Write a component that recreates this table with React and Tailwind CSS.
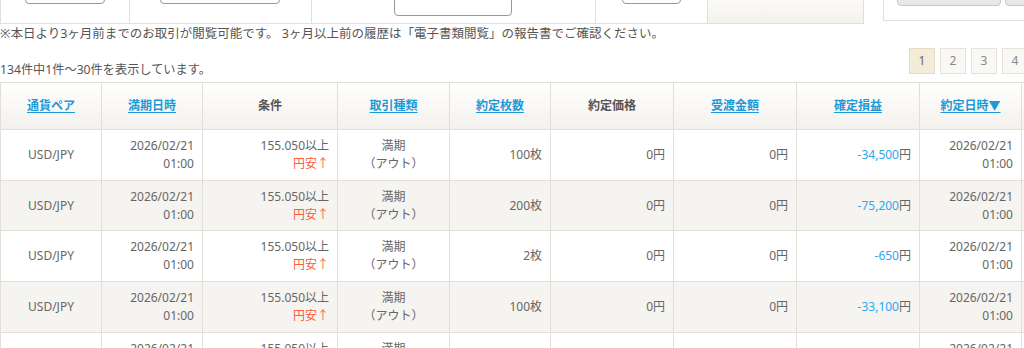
import React from 'react';

const rows = [
  { qty: '100枚', pl: '-34,500' },
  { qty: '200枚', pl: '-75,200' },
  { qty: '2枚', pl: '-650' },
  { qty: '100枚', pl: '-33,100' },
  { qty: '100枚', pl: '-12,000' },
];

const Link = ({ children }) => (
  <span className="text-[#1d9ad6] underline underline-offset-2 font-bold">{children}</span>
);

const headers = [
  { label: '通貨ペア', link: true, w: 'w-[101px]' },
  { label: '満期日時', link: true, w: 'w-[101px]' },
  { label: '条件', link: false, w: 'w-[135px]' },
  { label: '取引種類', link: true, w: 'w-[112px]' },
  { label: '約定枚数', link: true, w: 'w-[101px]' },
  { label: '約定価格', link: false, w: 'w-[123px]' },
  { label: '受渡金額', link: true, w: 'w-[123px]' },
  { label: '確定損益', link: true, w: 'w-[123px]' },
  { label: '約定日時▼', link: true, w: 'w-[102px]' },
  { label: '', link: false, w: 'w-[120px]' },
];

const td = 'border border-[#e2ded8] h-[50.7px] px-[8px] py-0 align-middle';

export default function App() {
  return (
    <div
      className="w-[1024px] h-[348px] overflow-hidden bg-white text-[12px] leading-[18px] text-[#555]"
      style={{ fontFamily: '"Noto Sans", "Noto Sans CJK JP", sans-serif' }}
    >
      {/* search form, scrolled off the top */}
      <div className="flex h-[24px]">
        <div className="flex w-[864px] h-[24px] border-l border-b border-r border-[#e2ded8] overflow-hidden">
          <div className="w-[129px] flex items-end pl-[24px] border-r border-[#e2ded8]">
            <div className="w-[80px] h-[30px] mb-[19px] border border-[#9a9a9a] rounded-[4px] bg-white" />
          </div>
          <div className="w-[182px] flex items-end pl-[30px] border-r border-[#e2ded8]">
            <div className="w-[120px] h-[30px] mb-[19px] border border-[#9a9a9a] rounded-[4px] bg-white" />
          </div>
          <div className="w-[284px] flex items-end pl-[82px] border-r border-[#e2ded8]">
            <div className="w-[118px] h-[30px] mb-[7px] border border-[#9a9a9a] rounded-[4px] bg-white" />
          </div>
          <div className="w-[112px] flex items-end pl-[26px] border-r border-[#e2ded8]">
            <div className="w-[59px] h-[30px] mb-[19px] border border-[#9a9a9a] rounded-[4px] bg-white" />
          </div>
          <div className="flex-1 bg-gradient-to-b from-[#fbfaf7] to-[#f4f2ec]" />
        </div>
        <div className="ml-[19px] flex-1 h-[21px] border-l border-b border-[#e2ded8] flex items-end gap-[4px] pl-[13px] overflow-hidden">
          <div className="w-[104px] h-[30px] mb-[14px] shrink-0 border border-[#c8c8c8] rounded-[4px] bg-gradient-to-b from-[#f8f8f8] to-[#e6e6e6]" />
          <div className="w-[104px] h-[30px] mb-[14px] shrink-0 border border-[#c8c8c8] rounded-[4px] bg-gradient-to-b from-[#f8f8f8] to-[#e6e6e6]" />
        </div>
      </div>

      <p className="whitespace-nowrap text-[12.5px] pt-[1px]">
        ※本日より3ヶ月前までのお取引が閲覧可能です。 3ヶ月以上前の履歴は「電子書類閲覧」の報告書でご確認ください。
      </p>

      <div className="flex justify-between h-[39px]">
        <p className="pt-[18px] text-[12.2px]">134件中1件～30件を表示しています。</p>
        <div className="flex gap-[5px] pt-[5px] -mr-[4px]">
          {['1', '2', '3', '4'].map((n) => (
            <div
              key={n}
              className={`w-[26px] h-[26px] flex items-center justify-center border text-[12px] ${
                n === '1'
                  ? 'bg-[#f3ecd8] border-[#e6dcc2] text-[#666]'
                  : 'bg-[#f9f8f5] border-[#e6e3dd] text-[#888]'
              }`}
            >
              {n}
            </div>
          ))}
        </div>
      </div>

      <table className="table-fixed border-collapse w-[1121px] text-[#666]">
        <thead>
          <tr className="bg-gradient-to-b from-white to-[#f3f1ec]">
            {headers.map((h, i) => (
              <th
                key={i}
                className={`${h.w} border border-[#e2ded8] h-[47px] px-[4px] py-0 text-center align-middle font-bold text-[#555]`}
              >
                {h.link ? <Link>{h.label}</Link> : h.label}
              </th>
            ))}
          </tr>
        </thead>
        <tbody>
          {rows.map((r, i) => (
            <tr key={i} className={i % 2 === 1 ? 'bg-[#f6f4f0]' : 'bg-white'}>
              <td className={`${td} text-center`}>USD/JPY</td>
              <td className={`${td} text-right`}>
                2026/02/21
                <br />
                01:00
              </td>
              <td className={`${td} text-right`}>
                155.050以上
                <br />
                <span className="text-[#ff5a3a]">円安↑</span>
              </td>
              <td className={`${td} text-center`}>
                満期
                <br />
                （アウト）
              </td>
              <td className={`${td} text-right`}>{r.qty}</td>
              <td className={`${td} text-right`}>0円</td>
              <td className={`${td} text-right`}>0円</td>
              <td className={`${td} text-right`}>
                <span className="text-[#2aa7ee]">{r.pl}</span>円
              </td>
              <td className={`${td} text-right`}>
                2026/02/21
                <br />
                01:00
              </td>
              <td className={td} />
            </tr>
          ))}
        </tbody>
      </table>
    </div>
  );
}
